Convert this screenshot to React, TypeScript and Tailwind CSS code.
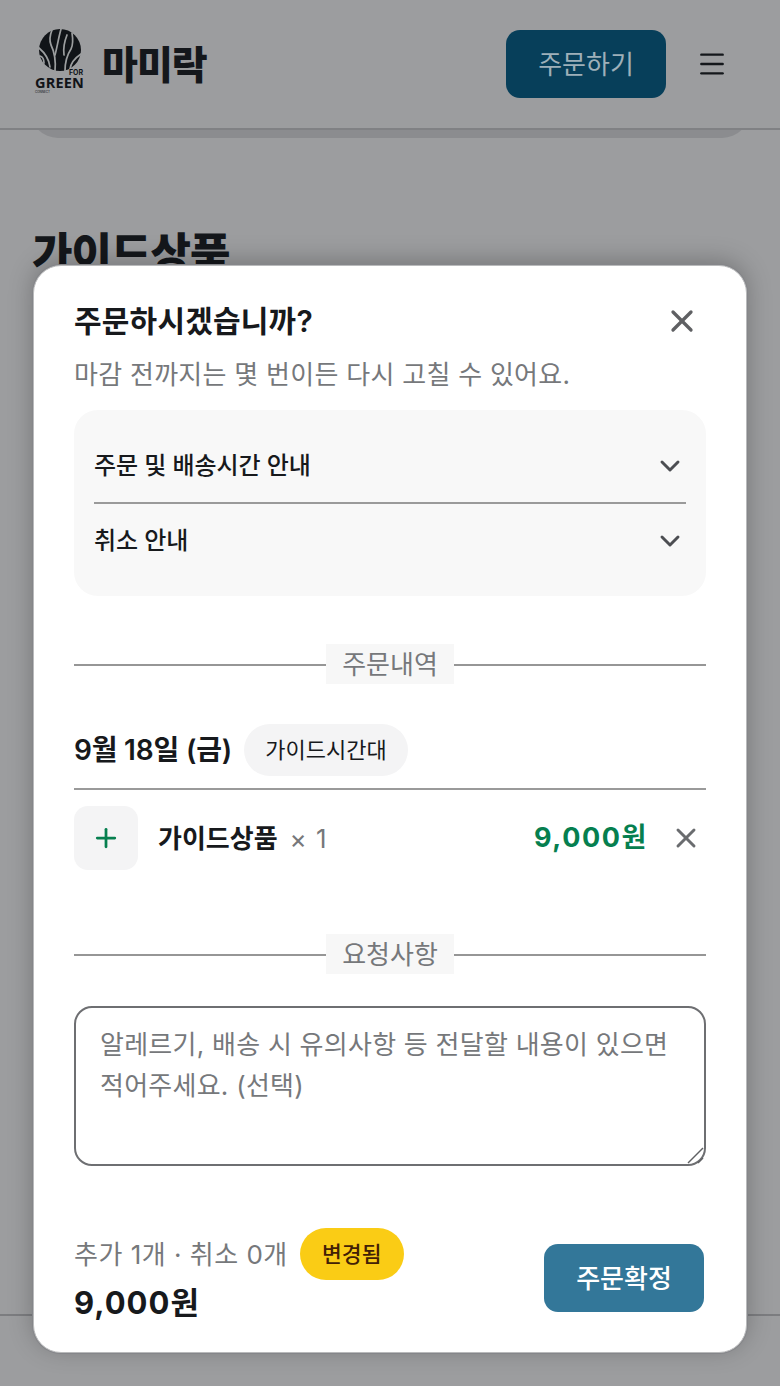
import { ChevronDown, Menu, Plus, X } from "lucide-react";

const font = "font-['Inter','Noto_Sans_CJK_KR',sans-serif]";

function Logo() {
  return (
    <div className="mb-[7px] flex w-[50px] flex-col text-[#111418]">
      <svg viewBox="0 0 44 44" className="ml-[3px] h-[44px] w-[44px]">
        <circle cx="22" cy="22" r="21" fill="#111418" />
        <g fill="none" stroke="#9c9e9f" strokeWidth="1.7" strokeLinecap="round">
          {/* 나무 줄기와 가지 */}
          <path d="M17 43C18 32 17 25 13 17C11 12 12 7 14 2" />
          <path d="M27 43C27 34 29 27 33 21C35 17 35 11 34 5" />
          <path d="M17 27C19 20 20 12 23 1" />
          <path d="M26 27C25 20 27 12 29 7" />
          <path d="M12 39C11 31 7 25 1 20" />
          <path d="M32 41C33 34 37 30 43 26" />
          <path d="M6 35C6 31 5 29 2 28" />
        </g>
      </svg>
      <span className="-mt-[2px] mr-[2px] h-[6px] self-end text-[7px] font-bold leading-[6px]">FOR</span>
      <span className="h-[13px] font-['Open_Sans',sans-serif] text-[14.5px] font-bold leading-[13px] tracking-[0.2px]">GREEN</span>
      <span className="mt-[2px] h-[3px] text-[3px] leading-[3px]">CONNECT</span>
    </div>
  );
}

function SectionDivider({ label }: { label: string }) {
  return (
    <div className="flex items-center">
      <div className="mt-[2px] h-[2px] flex-1 bg-[#969696]" />
      <div className="flex h-10 w-[128px] items-center justify-center bg-[#f7f7f7] text-[26px] text-[#76787b]">{label}</div>
      <div className="mt-[2px] h-[2px] flex-1 bg-[#969696]" />
    </div>
  );
}

export default function App() {
  return (
    <div className={`${font} relative h-[1386px] w-[780px] overflow-hidden bg-[#9c9d9f] text-[#17191c]`}>
      {/* 뒤 페이지 */}
      <div className="mx-[30px] h-[138px] rounded-b-[28px] bg-[#8b8c8f]" />
      <header className="absolute left-0 top-0 flex h-[130px] w-full items-center justify-between border-b-2 border-[#808184] bg-[#9c9d9f] pl-[35px] pr-[52px]">
        <div className="flex items-center gap-[17px]">
          <Logo />
          <span className="text-[39px] font-black leading-none tracking-[-1px] text-[#14171b]">마미락</span>
        </div>
        <div className="flex items-center gap-[30px]">
          <div className="flex h-[68px] w-[160px] items-center justify-center rounded-[14px] bg-[#073f5a] text-[26px] text-[#9eb0b9]">주문하기</div>
          <Menu size={32} strokeWidth={1.8} className="text-[#14171b]" />
        </div>
      </header>
      <div className="ml-[32px] mt-[88px] text-[44px] font-black leading-[56px] tracking-[-1px] text-[#14171b]">가이드상품</div>
      <div className="absolute bottom-[70px] left-0 h-[2px] w-full bg-[#7c7d80]" />

      {/* 주문 확인 모달 */}
      <div className="absolute left-[33px] top-[265px] flex h-[1088px] w-[714px] flex-col rounded-[28px] border border-[#b9babb] bg-white px-[40px] pt-[35px] shadow-[0_0_0_1px_#85868a,0_-4px_24px_rgba(0,0,0,0.25)]">
        <div className="flex h-[40px] items-center justify-between">
          <span className="text-[30px] font-semibold tracking-[0.2px]">주문하시겠습니까?</span>
          <X size={36} strokeWidth={2.2} className="mr-[6px] text-[#5f6063]" />
        </div>
        <p className="mt-[16px] text-[26px] leading-[36px] tracking-[0.27px] text-[#76787b]">마감 전까지는 몇 번이든 다시 고칠 수 있어요.</p>

        <div className="mt-[17px] rounded-[24px] bg-[#f8f8f8] px-[20px] pt-[20px]">
          <div className="flex h-[74px] items-center justify-between border-b-2 border-[#9a9a9a]">
            <span className="text-[24px] font-medium tracking-[-0.1px]">주문 및 배송시간 안내</span>
            <ChevronDown size={32} strokeWidth={2.2} className="text-[#4c4e52]" />
          </div>
          <div className="flex h-[74px] items-center justify-between">
            <span className="text-[24px] font-medium tracking-[-0.1px]">취소 안내</span>
            <ChevronDown size={32} strokeWidth={2.2} className="text-[#4c4e52]" />
          </div>
          <div className="h-[18px]" />
        </div>

        <div className="mt-[48px]"><SectionDivider label="주문내역" /></div>

        <div className="mt-[40px] flex h-[52px] items-center gap-[12px]">
          <span className="text-[28px] font-semibold tracking-[-0.2px]">9월 18일 (금)</span>
          <span className="flex h-[52px] w-[164px] items-center justify-center rounded-full bg-[#f4f4f5] text-[22px]">가이드시간대</span>
        </div>
        <div className="mt-[12px] h-[2px] bg-[#9a9a9a]" />
        <div className="mt-[16px] flex h-[64px] items-center">
          <div className="flex h-[64px] w-[64px] items-center justify-center rounded-[14px] bg-[#f4f4f5]">
            <Plus size={30} strokeWidth={2.2} className="text-[#067f4f]" />
          </div>
          <span className="ml-[20px] text-[26px] font-semibold">가이드상품</span>
          <span className="ml-[12px] text-[26px] tracking-[1px] text-[#76787b]">× 1</span>
          <span className="ml-auto text-[27px] font-bold tracking-[1.6px] text-[#067f4f]">9,000원</span>
          <X size={32} strokeWidth={2.2} className="ml-[22px] mr-[4px] text-[#6a6c6f]" />
        </div>

        <div className="mt-[64px]"><SectionDivider label="요청사항" /></div>

        <div className="relative mt-[32px] h-[160px]">
          <textarea
            className="h-full w-full resize-none rounded-[18px] border-2 border-[#6e6f72] px-[24px] py-[16px] text-[26px] leading-[41px] tracking-[0.25px] outline-none placeholder:text-[#76787b]"
            placeholder="알레르기, 배송 시 유의사항 등 전달할 내용이 있으면 적어주세요. (선택)"
          />
          {/* 리사이즈 손잡이 */}
          <svg viewBox="0 0 20 20" className="absolute bottom-0 right-0 h-5 w-5" fill="none" stroke="#5f6063" strokeWidth="1.4">
            <path d="M2 17L17 2" />
            <path d="M12 17L17 12" />
          </svg>
        </div>

        <div className="mt-[62px] flex items-end justify-between">
          <div>
            <div className="flex items-center gap-[12px]">
              <span className="text-[26px] tracking-[0.5px] text-[#76787b]">추가 1개 · 취소 0개</span>
              <span className="flex h-[52px] w-[104px] items-center justify-center rounded-full bg-[#facc15] text-[21.5px] font-medium text-[#422006]">변경됨</span>
            </div>
            <div className="mt-[1px] text-[31px] font-bold leading-[44px] tracking-[1px]">9,000원</div>
          </div>
          <button className="mb-[13px] mr-[2px] flex h-[68px] w-[160px] items-center justify-center rounded-[14px] bg-[#337799] text-[26px] font-medium text-white">주문확정</button>
        </div>
      </div>
    </div>
  );
}
